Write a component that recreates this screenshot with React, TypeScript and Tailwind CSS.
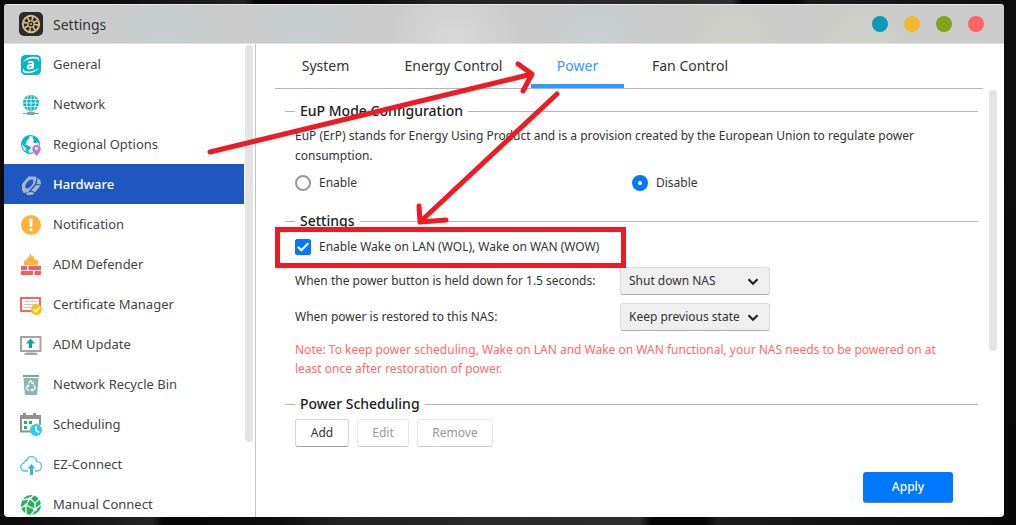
import React, { useState } from "react";
import { type FC, type ReactNode } from "react";
import clsx from "clsx";

const SettingsIcon: FC = () => (
  <svg viewBox="0 0 24 24" className="h-6 w-6" aria-hidden="true">
    <rect width="24" height="24" rx="5" fill="#2b2b2b" />
    <circle cx="12" cy="12" r="8.2" fill="none" stroke="#d9bd83" strokeWidth="1.9" />
    <circle cx="12" cy="12" r="5" fill="none" stroke="#d9bd83" strokeWidth="4.4" strokeDasharray="1.5 2.427" />
    <circle cx="12" cy="12" r="3.2" fill="none" stroke="#d9bd83" strokeWidth="1.3" />
    <circle cx="12" cy="12" r="1" fill="#d9bd83" />
  </svg>
);

const icons: Record<string, ReactNode> = {
  General: (
    <>
      <rect x="2" y="2" width="20" height="20" rx="4.5" fill="#06b8bd" />
      <path d="M4.2 9C7 4.6 14 2.6 19.4 4.6c1.2.6 1 2.4 0 4.4.2-1.9-.6-2.9-2.4-3.2C12.6 5 8 6.2 4.2 9z" fill="#fff" />
      <path d="M19.8 15C17 19.4 10 21.4 4.6 19.4c-1.2-.6-1-2.4 0-4.4-.2 1.9.6 2.9 2.4 3.2 4.4.8 9-.4 12.8-3.2z" fill="#fff" />
      <path d="M9.3 9.6c1.8-1.1 5-.9 4.8 1.1l-.6 5.3M13.6 12c-2.6-.2-4.9.3-5 2 0 2 3.5 1.9 4.7 0" fill="none" stroke="#fff" strokeWidth="2" />
    </>
  ),
  Network: (
    <>
      <circle cx="12" cy="10" r="8" fill="#0cb8c0" />
      <path d="M5 6.5h14M4 10h16M5 13.5h14M12 2v16M9.5 2.5C7 7 7 13 9.5 17.5M14.5 2.5c2.5 4.5 2.5 10.5 0 15" fill="none" stroke="#fff" strokeWidth=".8" />
      <path d="M12 18v3M4 20.5h16" stroke="#8e9bab" strokeWidth="1" />
      <rect x="8" y="19" width="8" height="3" rx="1" fill="#8e9bab" />
    </>
  ),
  "Regional Options": (
    <>
      <circle cx="11.5" cy="11.5" r="8.9" fill="#fff" stroke="#0cb8c0" strokeWidth="1.2" />
      <path d="M2.6 10C3.5 6 6.5 3.2 10 2.6l.5 2.400L9 6.5 7.5 8v2L6 11.5l3.500 1.200L12 14l-1 2.500-1.500.8.500 3.700-2.500-.8-.5-4.700L4.500 13z" fill="#0cb8c0" />
      <path d="M14 2.8c3.500.9 6 4 6.400 7.200l-2.400-.5-2 1-2-1.500 1-2-1.500-1.500z" fill="#0cb8c0" />
      <path d="M17.500 23.500c-1.500-2.500-4.500-4.300-4.500-7.500a4.500 4.500 0 0 1 9 0c0 3.200-3 5-4.500 7.500z" fill="#bb78d0" stroke="#fff" strokeWidth=".5" />
      <circle cx="17.5" cy="15.5" r="1.4" fill="#fff" />
    </>
  ),
  Hardware: (
    <>
      <path d="M9.500 3.500h7.200l.8 1.800L16 11l-7 8.300-4.500.7L3 16.500V11z" fill="#a4b7c6" />
      <ellipse cx="10.300" cy="11" rx="2.800" ry="5.400" transform="rotate(40 10.300 11)" fill="#2056c0" />
      <path d="M18.500 4.800l3 2.700.5 4-4.300-.6zM17 12l4.600.5-5.300 6.500-4.200-1.200zM11.200 18.800l4.300 1.300-2 1.600-5 .3-1.800-1.500z" fill="#a4b7c6" />
    </>
  ),
  Notification: (
    <>
      <circle cx="12" cy="12" r="10" fill="#ffb33b" />
      <path d="M10.300 5.500h3.400l-.6 8.500h-2.200z" fill="#fff" />
      <circle cx="12" cy="16.7" r="1.6" fill="#fff" />
    </>
  ),
  "ADM Defender": (
    <>
      <path d="M5.500 12C4.500 10 5 8.500 6.500 6l.7 2.500L8.500 4l1 1.500L11.500 0 13 4l1.500-2 1 5 1.500-2 .5 3 1.500-1.500c.6 2 .1 4-.5 5.500z" fill="#ffb33b" />
      <path d="M2 13h6v4H2zM9.500 13H22v4H9.500zM2 18h12v4H2zM15.500 18H22v4h-6.500z" fill="#fa5b5e" />
    </>
  ),
  "Certificate Manager": (
    <>
      <rect x="2" y="5" width="19" height="13" fill="#fff" stroke="#fa6366" strokeWidth="2" />
      <path d="M6 8.500h12M5 11.500h13M5 14.500h8" stroke="#c9c9c9" strokeWidth="1" />
      <circle cx="17.5" cy="16.5" r="5.5" fill="#ffc10d" />
      <path d="M14.800 16.500l2 2 3.700-4" fill="none" stroke="#fff" strokeWidth="1.7" />
    </>
  ),
  "ADM Update": (
    <>
      <rect x="2" y="4" width="19.5" height="14" fill="#fff" stroke="#aaa39f" strokeWidth="2" />
      <path d="M7.500 18h9v1.500h-9zM5.500 20h13v2h-13z" fill="#aaa39f" />
      <path d="M11.500 5.500l4.500 5h-3V15h-3v-4.500H7z" fill="#14a0a0" />
    </>
  ),
  "Network Recycle Bin": (
    <>
      <path d="M4 2h16v2H4z" fill="#78a8a4" />
      <path d="M4.500 5h15l-1.200 15.500a1.500 1.500 0 0 1-1.500 1.500H7.200a1.500 1.500 0 0 1-1.500-1.500z" fill="#8ab5b1" />
      <path d="M9.500 10.500l2.200-3 2.200 3M15 12l1.300 3-1.300 2h-2.300M10.700 17H8.500l-1-2 1.500-3" fill="none" stroke="#fff" strokeWidth="1.2" />
      <path d="M14.700 8.500v3.200l-2.800-1.200zM13.500 15v4l-2-2zM7.200 12.500l2.600-1.200.6 2.900z" fill="#fff" />
    </>
  ),
  Scheduling: (
    <>
      <path d="M1 2h21v4H1z" fill="#929292" />
      <path d="M4 0h3v3H4zM14 0h3v3h-3z" fill="#929292" />
      <path d="M2 6v12.500h11M21 6v6" fill="none" stroke="#929292" strokeWidth="2" />
      <path d="M5 8h3v3H5zM10 8h3v3h-3zM5 13h3v3H5z" fill="#1eb573" />
      <circle cx="17" cy="17" r="6" fill="#2bcdf4" />
      <path d="M17 13v4.500l3.200 2" fill="none" stroke="#fff" strokeWidth="1.7" />
    </>
  ),
  "EZ-Connect": (
    <>
      <path d="M9 18H5.500a4 4 0 0 1-.6-7.900C5 8.500 6.200 7.400 7.700 7.500 8.300 5 10.200 3.600 12.500 3.600c3 0 5 2.200 5.200 5C20.500 8.600 22.500 10.700 22.500 13.300c0 2.600-1.900 4.700-4.500 4.700h-2" fill="none" stroke="#59c3cd" strokeWidth="1.4" />
      <path d="M12.500 11l4 4.500H14V22h-3v-6.500H8.500z" fill="#43b4c1" />
    </>
  ),
  "Manual Connect": (
    <>
      <circle cx="12" cy="12" r="10" fill="#27b35b" />
      <path d="M4 7l7-1.500L15 2M11 5.500L7 12l-5.500 3M7 12l9 4.500 6-5M11 5.500l5 4.500v6.500L12 22M16 10l4.500-4M7 12v9" fill="none" stroke="#fff" strokeWidth="1.3" />
      <circle cx="11" cy="5.500" r="1.400" fill="#fff" />
      <circle cx="16" cy="16.500" r="1.800" fill="#fff" />
      <circle cx="7" cy="12" r="1.600" fill="#fff" />
    </>
  ),
};

const tabs = [
  { name: "System", width: "w-[101px]" },
  { name: "Energy Control", width: "w-[155px]" },
  { name: "Power", width: "w-[93px]" },
  { name: "Fan Control", width: "w-[132px]" },
];

const Legend: FC<{ children: ReactNode }> = ({ children }) => (
  <div className="-ml-[10px] flex h-5 items-center gap-[5px]">
    <div className="h-px w-[10px] bg-[#b4b4c4]" />
    <h2 className="text-[14px] font-medium leading-5 text-[#1c1c1c]">{children}</h2>
    <div className="h-px flex-1 bg-[#b4b4c4]" />
  </div>
);

const Select: FC<{ id: string; label: string; value: string; options: string[] }> = ({ id, label, value, options }) => (
  <div className="flex items-center">
    <label htmlFor={id} className="w-[325px]">{label}</label>
    <div className="relative">
      <select
        id={id}
        defaultValue={value}
        className="h-7 w-[150px] appearance-none rounded-[3px] border border-[#dcdcdc] border-b-[#adadad] bg-[#efefef] pl-2 text-[12px] text-[#333]"
      >
        {options.map((option) => (
          <option key={option}>{option}</option>
        ))}
      </select>
      <svg viewBox="0 0 12 8" className="pointer-events-none absolute right-[11px] top-[11px] h-2 w-3" aria-hidden="true">
        <path d="M1.500 1.300L6 5.700l4.500-4.400" fill="none" stroke="#222" strokeWidth="2.2" />
      </svg>
    </div>
  </div>
);

// Hand drawn markers over the window
const Markers: FC = () => (
  <svg viewBox="0 0 1016 525" className="pointer-events-none absolute left-0 top-0 h-[525px] w-[1016px]" aria-hidden="true">
    <g fill="none" stroke="#ed1c24" strokeWidth="5" strokeLinecap="round" strokeLinejoin="round">
      <path d="M210 152L532 74M518 64l14 10-9 17" />
      <path d="M557 94L420 222M419 206l1 16 26-2" />
      <rect x="277.5" y="229.5" width="346" height="36" strokeLinejoin="miter" />
    </g>
  </svg>
);

export default function App() {
  const [section, setSection] = useState("Hardware");
  const [tab, setTab] = useState("Power");

  return (
    <div className="relative flex h-screen overflow-hidden bg-[#080808] bg-[linear-gradient(100deg,#0b0b0b_0%,#0b0b0b_10%,#242424_22%,#060606_23%,#0c0c0c_33%,#222_39%,#2e2e2e_66%,#060606_67%,#060606_72%,#1c1c1c_73%,#070707_100%)] pb-2 pl-1 pr-3 pt-1 font-['Noto_Sans',sans-serif] text-[#333]">
      <div className="flex flex-1 flex-col overflow-hidden rounded bg-white">
        <header className="flex h-10 shrink-0 items-center border-y border-t-[#e8e8e8] border-b-[#e2e2e2] bg-[#cbcbcb] bg-[radial-gradient(circle_at_16%_110%,#c6d0d2,transparent_60px),radial-gradient(circle_at_30%_110%,#c6d0d2,transparent_60px),radial-gradient(circle_at_45%_110%,#d9d9d9,transparent_70px),radial-gradient(circle_at_59%_110%,#c8d1d3,transparent_60px),radial-gradient(circle_at_73%_110%,#cfd2c7,transparent_60px),radial-gradient(circle_at_86%_110%,#cfd2c7,transparent_60px)] pl-[15px] pr-5">
          <SettingsIcon />
          <h1 className="ml-[10px] flex-1 text-[14px]">Settings</h1>
          <div className="flex gap-4">
            <button aria-label="Help" className="h-4 w-4 rounded-full bg-[#0c98b8]" />
            <button aria-label="Minimize" className="h-4 w-4 rounded-full bg-[#f3b72d]" />
            <button aria-label="Maximize" className="h-4 w-4 rounded-full bg-[#84a31b]" />
            <button aria-label="Close" className="h-4 w-4 rounded-full bg-[#ff6464]" />
          </div>
        </header>

        <div className="flex min-h-0 flex-1">
          <nav className="flex w-[252px] shrink-0 gap-px border-r border-[#c4c4c8]">
            <ul className="w-60 overflow-hidden">
              {Object.keys(icons).map((name) => (
                <li key={name}>
                  <button
                    onClick={() => setSection(name)}
                    className={clsx(
                      "flex h-10 w-full items-center gap-[10px] pl-[15px] pt-px text-left text-[13px]",
                      name === section ? "bg-[#2056c0] font-medium text-white" : "text-[#444]",
                    )}
                  >
                    <svg viewBox="0 0 24 24" className="h-6 w-6 shrink-0" aria-hidden="true">{icons[name]}</svg>
                    {name}
                  </button>
                </li>
              ))}
            </ul>
            <div className="mt-px h-[397px] w-2 rounded-full bg-[#e4e4e4]" />
          </nav>

          <main className="flex min-w-0 flex-1 flex-col pl-[19px] text-[12px] leading-5">
            <div role="tablist" className="mr-[21px] flex h-[45px] border-b border-[#b4b4b8]">
              {tabs.map((t) => (
                <button
                  key={t.name}
                  role="tab"
                  aria-selected={t.name === tab}
                  onClick={() => setTab(t.name)}
                  className={clsx(
                    "h-11 whitespace-nowrap border-b-4 pt-1 text-[14px]",
                    t.width,
                    t.name === tab ? "border-[#2e9bff] text-[#2e9bff]" : "border-transparent",
                  )}
                >
                  {t.name}
                </button>
              ))}
            </div>

            <div className="flex min-h-0 flex-1 justify-between pr-[7px]">
              <div className="flex-1 overflow-hidden pl-5 pr-[11px] pt-3">
                <section>
                  <Legend>EuP Mode Configuration</Legend>
                  <p className="mt-[5px]">
                    EuP (ErP) stands for Energy Using Product and is a provision created by the European Union to regulate power consumption.
                  </p>
                  <div className="mt-[7px] flex h-5">
                    <label className="flex w-[337px] items-center gap-2">
                      <input type="radio" name="eup" className="h-4 w-4 appearance-none rounded-full border-2 border-[#999] checked:border-[6px] checked:border-[#0078ff]" />
                      Enable
                    </label>
                    <label className="flex items-center gap-2">
                      <input type="radio" name="eup" defaultChecked className="h-4 w-4 appearance-none rounded-full border-2 border-[#999] checked:border-[6px] checked:border-[#0078ff]" />
                      Disable
                    </label>
                  </div>
                </section>

                <section className="mt-[18px]">
                  <Legend>Settings</Legend>
                  <label className="mt-[6px] flex h-5 items-center gap-2">
                    <span className="relative h-4 w-4">
                      <input type="checkbox" defaultChecked className="peer block h-4 w-4 appearance-none rounded-[2px] border border-[#999] checked:border-[#0078ff] checked:bg-[#0078ff]" />
                      <svg viewBox="0 0 16 16" className="pointer-events-none absolute inset-0 hidden h-4 w-4 peer-checked:block" aria-hidden="true">
                        <path d="M2.800 7.800l3.500 3.500 7-7" fill="none" stroke="#fff" strokeWidth="2" />
                      </svg>
                    </span>
                    Enable Wake on LAN (WOL), Wake on WAN (WOW)
                  </label>
                  <div className="mt-[10px] flex flex-col gap-2">
                    <Select
                      id="power-button"
                      label="When the power button is held down for 1.5 seconds:"
                      value="Shut down NAS"
                      options={["Shut down NAS", "Sleep"]}
                    />
                    <Select
                      id="power-restored"
                      label="When power is restored to this NAS:"
                      value="Keep previous state"
                      options={["Keep previous state", "Power on", "Power off"]}
                    />
                  </div>
                  <p className="mt-[9px] pr-5 leading-[19px] text-[#ff6b6b]">
                    Note: To keep power scheduling, Wake on LAN and Wake on WAN functional, your NAS needs to be powered on at least once after restoration of power.
                  </p>
                </section>

                <section className="mt-4">
                  <Legend>Power Scheduling</Legend>
                  <div className="mt-[5px] flex gap-2">
                    <button className="h-7 w-[54px] rounded-[3px] border border-[#d6d6d6] border-b-[#a0a0a0]">Add</button>
                    <button disabled className="h-7 w-[52px] rounded-[3px] border border-[#e8e8e8] border-b-[#cfcfcf] text-[#999]">Edit</button>
                    <button disabled className="h-7 w-[76px] rounded-[3px] border border-[#e8e8e8] border-b-[#cfcfcf] text-[#999]">Remove</button>
                  </div>
                </section>
              </div>
              <div className="mt-px h-[261px] w-2 rounded-full bg-[#e4e4e4]" />
            </div>

            <footer className="flex justify-end pb-[14px] pr-[51px]">
              <button className="h-[31px] w-[90px] rounded-[3px] border-b border-[#5c87bd] bg-[#0078ff] font-medium text-white">Apply</button>
            </footer>
          </main>
        </div>
      </div>
      <Markers />
    </div>
  );
}
